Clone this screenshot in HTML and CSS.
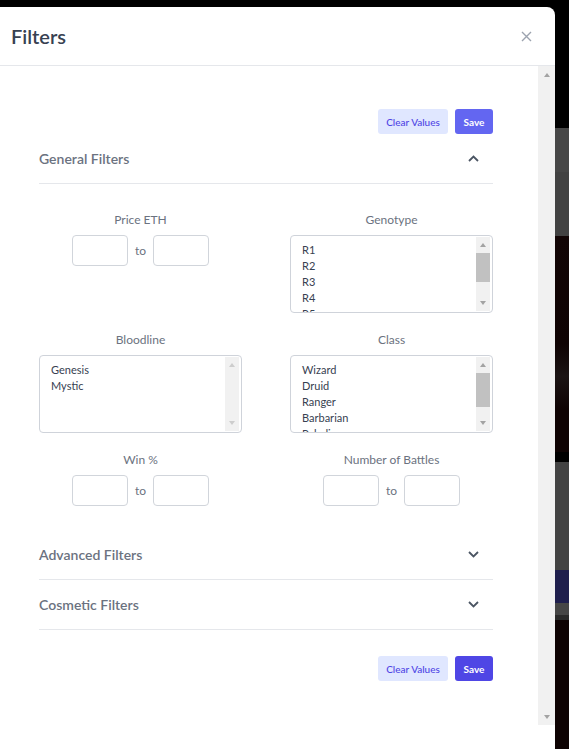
FILE: index.html
```html
<!DOCTYPE html>
<html lang="en">
<head>
<meta charset="utf-8">
<title>Filters</title>
<link rel="stylesheet" href="styles.css">
</head>
<body>
<div class="screen">
  <div class="modal">
    <div class="modal-header">
      <h2 class="modal-title">Filters</h2>
      <button class="close" aria-label="Close">
        <svg width="11" height="11" viewBox="0 0 11 11"><path d="M1 1L10 10M10 1L1 10" stroke="#9ca3af" stroke-width="1.4" fill="none"/></svg>
      </button>
    </div>
    <div class="modal-body">
      <div class="scroll-content">
        <div class="actions">
          <button class="btn btn-light">Clear Values</button>
          <button class="btn btn-primary">Save</button>
        </div>

        <div class="acc-item">
          <div class="acc-header">
            <span class="acc-title">General Filters</span>
            <span class="chev"><svg width="11" height="7" viewBox="0 0 11 7"><path d="M1 6L5.5 1.5L10 6" stroke="#4b5563" stroke-width="1.8" fill="none"/></svg></span>
          </div>
        </div>
        <div class="acc-panel">
          <div class="filter-grid">
            <div class="field">
              <div class="label">Price ETH</div>
              <div class="range"><span class="input"></span><span class="to">to</span><span class="input"></span></div>
            </div>
            <div class="field">
              <div class="label">Genotype</div>
              <div class="listbox">
                <div class="options">
                  <div>R1</div><div>R2</div><div>R3</div><div>R4</div><div>R5</div>
                </div>
                <div class="lb-scroll">
                  <span class="arr up"></span>
                  <span class="lb-track"><span class="thumb thumb-geno"></span></span>
                  <span class="arr down"></span>
                </div>
              </div>
            </div>
            <div class="field">
              <div class="label">Bloodline</div>
              <div class="listbox">
                <div class="options">
                  <div>Genesis</div><div>Mystic</div>
                </div>
                <div class="lb-scroll disabled">
                  <span class="arr up"></span>
                  <span class="lb-track"></span>
                  <span class="arr down"></span>
                </div>
              </div>
            </div>
            <div class="field">
              <div class="label">Class</div>
              <div class="listbox">
                <div class="options">
                  <div>Wizard</div><div>Druid</div><div>Ranger</div><div>Barbarian</div><div>Paladin</div>
                </div>
                <div class="lb-scroll">
                  <span class="arr up"></span>
                  <span class="lb-track"><span class="thumb thumb-class"></span></span>
                  <span class="arr down"></span>
                </div>
              </div>
            </div>
            <div class="field">
              <div class="label">Win %</div>
              <div class="range"><span class="input"></span><span class="to">to</span><span class="input"></span></div>
            </div>
            <div class="field">
              <div class="label">Number of Battles</div>
              <div class="range"><span class="input"></span><span class="to">to</span><span class="input"></span></div>
            </div>
          </div>
        </div>

        <div class="acc-item">
          <div class="acc-header">
            <span class="acc-title">Advanced Filters</span>
            <span class="chev"><svg width="11" height="7" viewBox="0 0 11 7"><path d="M1 1L5.5 5.5L10 1" stroke="#4b5563" stroke-width="1.8" fill="none"/></svg></span>
          </div>
        </div>
        <div class="acc-item">
          <div class="acc-header">
            <span class="acc-title">Cosmetic Filters</span>
            <span class="chev"><svg width="11" height="7" viewBox="0 0 11 7"><path d="M1 1L5.5 5.5L10 1" stroke="#4b5563" stroke-width="1.8" fill="none"/></svg></span>
          </div>
        </div>

        <div class="actions actions-bottom">
          <button class="btn btn-light">Clear Values</button>
          <button class="btn btn-primary btn-dark">Save</button>
        </div>
      </div>
      <div class="scrollbar">
        <span class="arr up"></span>
        <span class="sb-track"></span>
        <span class="arr down"></span>
      </div>
    </div>
  </div>
  <div class="strip">
    <span class="s s1"></span>
    <span class="s s2"></span>
    <span class="s s3"></span>
    <span class="s s4"></span>
    <span class="s s5"></span>
    <span class="s s6"></span>
    <span class="s s7"></span>
    <span class="s s8"></span>
    <span class="s s9"></span>
    <span class="s s10"></span>
  </div>
</div>
</body>
</html>
```

FILE: styles.css
```css
* { box-sizing: border-box; }
html, body { margin: 0; padding: 0; }
body {
  background: #000;
  width: 569px;
  height: 749px;
  overflow: hidden;
  font-family: Lato, "Open Sans", sans-serif;
}
.screen { display: flex; height: 749px; }

.modal {
  width: 555px;
  flex-shrink: 0;
  margin-top: 7px;
  height: 742px;
  background: #fff;
  border-top-right-radius: 8px;
  display: flex;
  flex-direction: column;
}
.modal-header {
  height: 59px;
  border-bottom: 1px solid #e5e7eb;
  display: flex;
  align-items: center;
  justify-content: space-between;
  padding: 0 23px 0 11px;
}
.modal-title {
  margin: 0;
  font-size: 20px;
  font-weight: 600;
  color: #374151;
}
.close {
  border: 0;
  background: none;
  padding: 0;
  width: 11px;
  height: 11px;
  display: flex;
}

.modal-body { height: 659px; display: flex; }
.scroll-content {
  flex: 1;
  padding: 0 45px 0 39px;
  overflow: hidden;
}
.scrollbar {
  width: 17px;
  background: #f1f1f1;
  display: flex;
  flex-direction: column;
}
.scrollbar .arr { height: 17px; }
.sb-track { flex: 1; }

.arr { display: flex; align-items: center; justify-content: center; }
.arr::after {
  content: "";
  width: 0; height: 0;
  border-left: 3.5px solid transparent;
  border-right: 3.5px solid transparent;
}
.arr.up::after { border-bottom: 4px solid #a3a3a3; }
.arr.down::after { border-top: 4px solid #a3a3a3; }
.disabled .arr.up::after { border-bottom-color: #cdcdcd; }
.disabled .arr.down::after { border-top-color: #cdcdcd; }

.actions {
  display: flex;
  justify-content: flex-end;
  gap: 7px;
  margin-top: 43px;
}
.actions-bottom { margin-top: 26px; }
.btn {
  height: 25px;
  border: 0;
  border-radius: 3px;
  font-family: Lato, "Open Sans", sans-serif;
  font-size: 10px;
  padding: 0;
  white-space: nowrap;
  text-align: center;
  cursor: pointer;
}
.btn-light { background: #e0e7ff; color: #4f46e5; font-weight: 500; width: 70px; }
.btn-primary { background: #6366f1; color: #fff; font-weight: 700; width: 38px; }
.btn-dark { background: #4f46e5; }

.acc-item { border-bottom: 1px solid #e5e7eb; }
.acc-header {
  height: 49px;
  display: flex;
  align-items: center;
  justify-content: space-between;
}
.acc-title {
  font-size: 14px;
  font-weight: 600;
  color: #6b7280;
}
.chev {
  width: 20px;
  margin-right: 10px;
  display: flex;
  justify-content: center;
}

.acc-panel { padding: 28px 0 24px; }
.filter-grid {
  display: grid;
  grid-template-columns: 1fr 1fr;
  column-gap: 48px;
  row-gap: 19px;
}
.field { display: flex; flex-direction: column; align-items: center; }
.label {
  font-size: 12px;
  line-height: 16px;
  color: #6b7280;
  margin-bottom: 7px;
}
.range { display: flex; align-items: center; gap: 7px; }
.input {
  width: 56px;
  height: 31px;
  border: 1px solid #d1d5db;
  border-radius: 4px;
  background: #fff;
}
.to { font-size: 12px; color: #6b7280; width: 11px; text-align: center; }

.listbox {
  width: 100%;
  height: 78px;
  border: 1px solid #cfd3da;
  border-radius: 4px;
  display: flex;
  overflow: hidden;
}
.options {
  flex: 1;
  padding: 6px 0 0 11px;
  font-size: 11px;
  line-height: 16px;
  color: #374151;
  overflow: hidden;
}
.lb-scroll {
  width: 14px;
  margin: 1px 2px 1px 0;
  background: #f1f1f1;
  display: flex;
  flex-direction: column;
}
.lb-scroll .arr { height: 16px; }
.lb-track { flex: 1; display: flex; flex-direction: column; }
.thumb { background: #c1c1c1; }
.thumb-geno { height: 29px; }
.thumb-class { height: 34px; }

.strip { flex: 1; display: flex; flex-direction: column; }
.s { display: block; }
.s1 { height: 128px; background: #000; }
.s2 { height: 44px; background: #474747; }
.s3 { height: 64px; background: #424242; }
.s4 { height: 216px; background: linear-gradient(#120505, #0f0303 50%, #1b1414 65%, #0f0303 80%); }
.s5 { height: 10px; background: #000; }
.s6 { height: 108px; background: #434343; }
.s7 { height: 33px; background: #1f1f4d; }
.s8 { height: 12px; background: #464646; }
.s9 { height: 5px; background: #2a2a2a; }
.s10 { flex: 1; background: #0e0303; }
```
